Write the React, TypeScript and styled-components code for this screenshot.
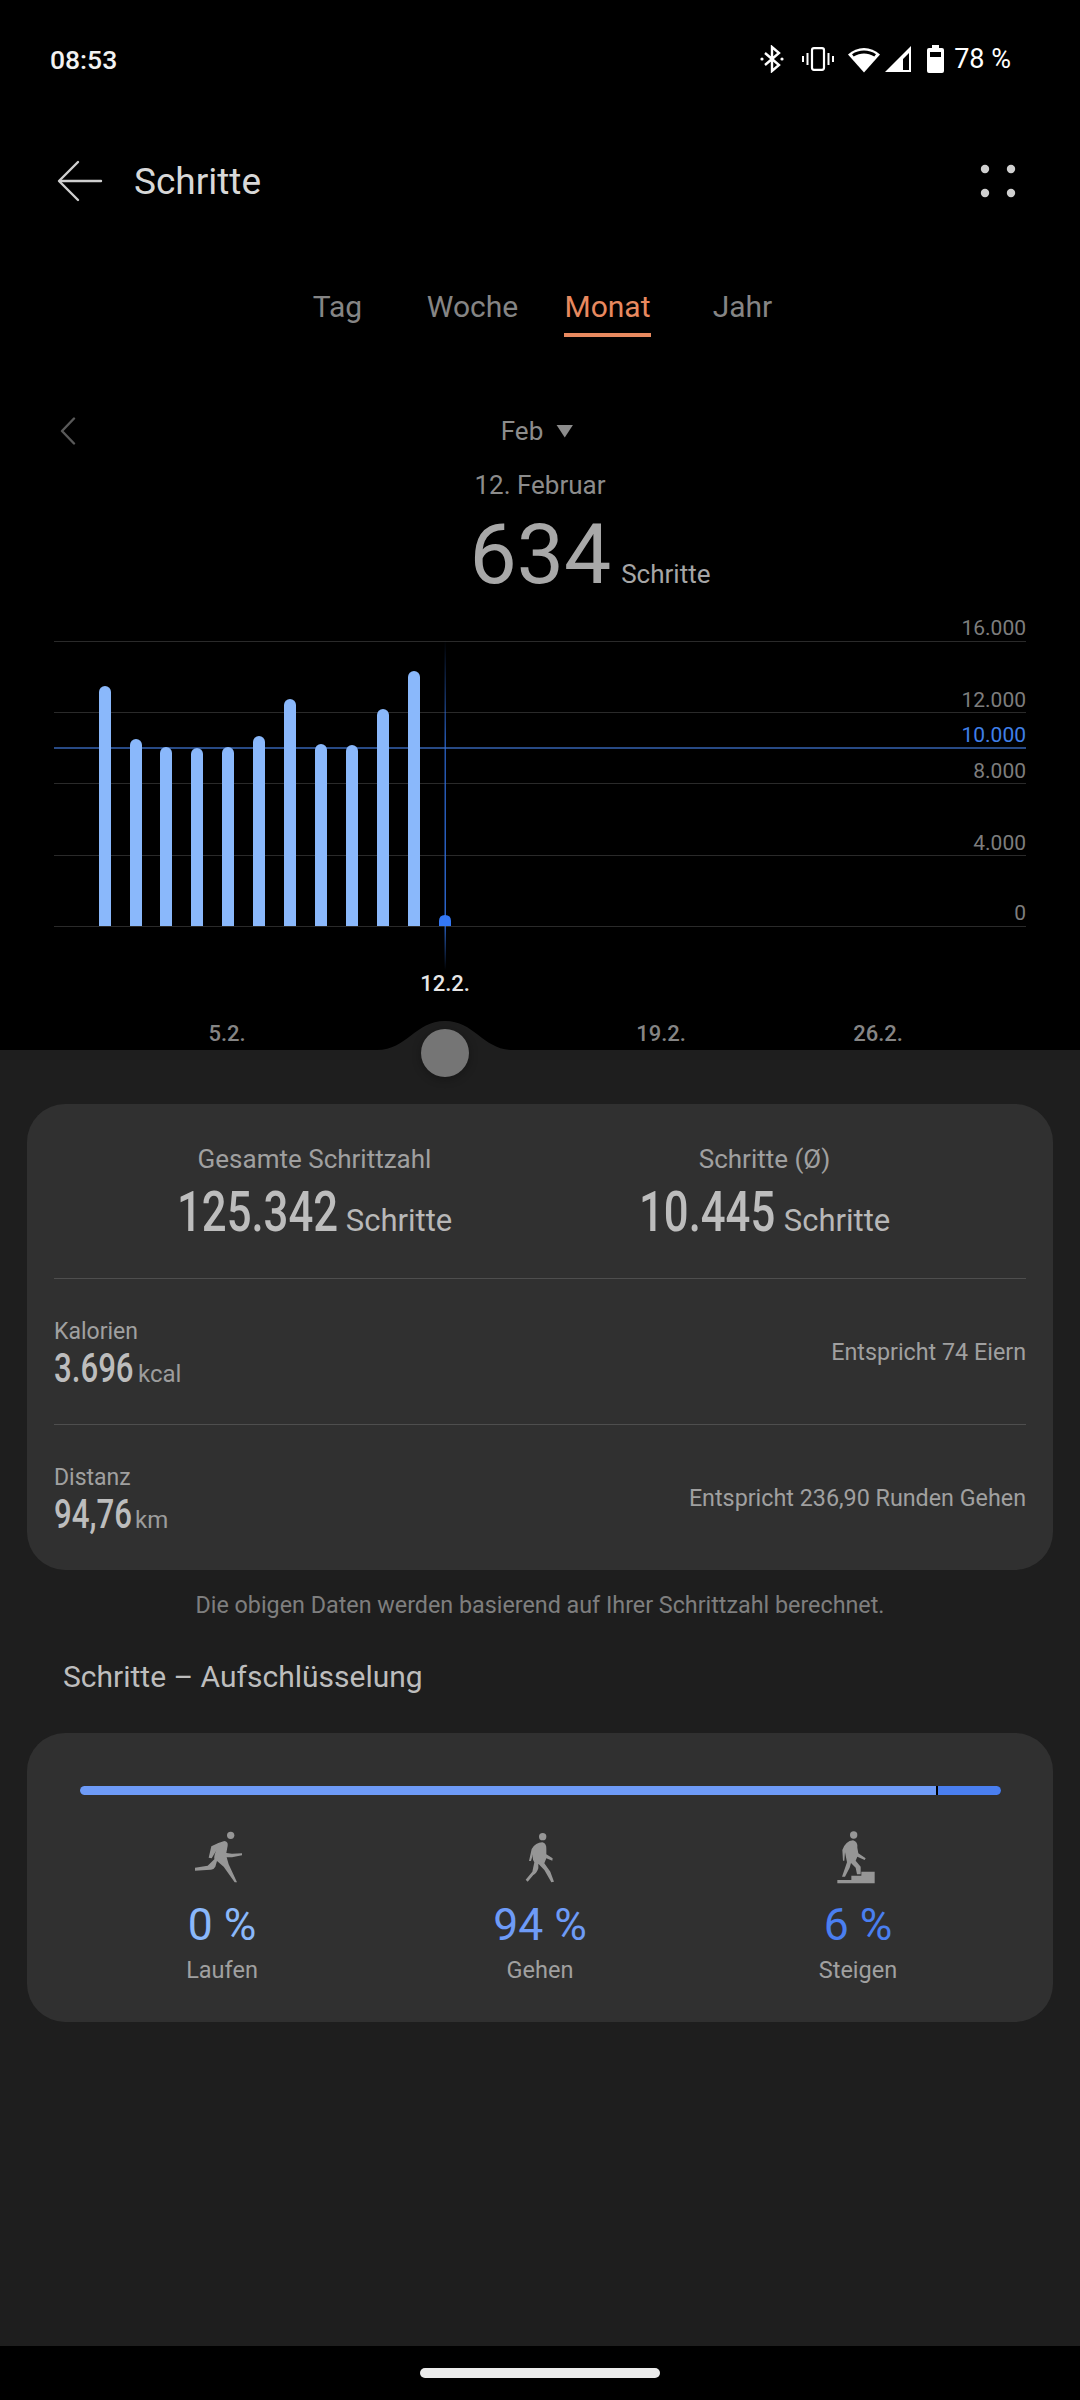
import styled, { createGlobalStyle } from 'styled-components';

const GlobalStyle = createGlobalStyle`
  html, body {
    margin: 0;
    padding: 0;
    background: #000;
  }
  * {
    box-sizing: border-box;
  }
`;

const BAR_X = [105, 136, 166, 197, 228, 259, 290, 321, 352, 383, 414];
const BAR_TOP = [686, 739, 747, 748, 747, 736, 699, 744, 745, 709, 671];
const GRID = [
  { y: 641, label: '16.000', dy: -14 },
  { y: 712, label: '12.000', dy: -13 },
  { y: 783, label: '8.000', dy: -13 },
  { y: 855, label: '4.000', dy: -13 },
  { y: 926, label: '0', dy: -14 },
];
const X_LABELS = [
  { x: 227, label: '5.2.' },
  { x: 661, label: '19.2.' },
  { x: 878, label: '26.2.' },
];
const TABS = ['Tag', 'Woche', 'Monat', 'Jahr'];

// chart svg starts at page y = 610
const CHART_TOP = 610;

const Chart = () => (
  <ChartSvg viewBox={`0 ${CHART_TOP} 1080 440`}>
    <defs>
      <linearGradient id="cursor" x1="0" y1="0" x2="0" y2="1">
        <stop offset="0" stopColor="#2f6fe0" stopOpacity="0" />
        <stop offset="0.3" stopColor="#2f6fe0" stopOpacity="0.75" />
        <stop offset="0.85" stopColor="#2f6fe0" stopOpacity="0.9" />
        <stop offset="1" stopColor="#2f6fe0" stopOpacity="0" />
      </linearGradient>
    </defs>
    {GRID.map((g) => (
      <g key={g.label}>
        <line x1="54" x2="1026" y1={g.y + 0.5} y2={g.y + 0.5} stroke="#2a2a2a" />
        <AxisLabel x="1026" y={g.y + g.dy + 8} textAnchor="end">
          {g.label}
        </AxisLabel>
      </g>
    ))}
    <line x1="54" x2="1026" y1="748" y2="748" stroke="#284a85" strokeWidth="2" />
    <AxisLabel x="1026" y="742" textAnchor="end" $goal>
      10.000
    </AxisLabel>
    {BAR_X.map((x, i) => (
      <path
        key={x}
        d={`M${x - 6} 926V${BAR_TOP[i] + 6}a6 6 0 0 1 12 0V926Z`}
        fill="#8ab8fb"
      />
    ))}
    <rect x="444.5" y="640" width="1.5" height="330" fill="url(#cursor)" />
    <path d="M439 926V921q0-6 6-6t6 6V926Z" fill="#3478f6" />
    <DayLabel x="445" y="991" textAnchor="middle" $active>
      12.2.
    </DayLabel>
    {X_LABELS.map((l) => (
      <DayLabel key={l.label} x={l.x} y="1041" textAnchor="middle">
        {l.label}
      </DayLabel>
    ))}
  </ChartSvg>
);

const BluetoothIcon = () => (
  <svg width="24" height="28" viewBox="0 0 24 28" fill="none">
    <path d="M5 8l14 12-7 6V2l7 6L5 20" stroke="#fff" strokeWidth="2.4" />
    <circle cx="2" cy="14" r="1.6" fill="#fff" />
    <circle cx="22" cy="14" r="1.6" fill="#fff" />
  </svg>
);

const VibrateIcon = () => (
  <svg width="32" height="24" viewBox="0 0 32 24" fill="none" stroke="#fff">
    <rect x="10" y="1.2" width="12" height="21.6" rx="2" strokeWidth="2.2" />
    <path d="M5.5 6v12M1 9v6M26.5 6v12M31 9v6" strokeWidth="2" />
  </svg>
);

const WifiIcon = () => (
  <svg width="34" height="28" viewBox="0 0 34 28">
    <path d="M17 27.5L1 9.5C10 .8 24 .8 33 9.5Z" fill="#fff" />
    <path d="M5 9.3C12 4.3 22 4.3 29 9.3L27.3 11.4C20.6 7.4 13.4 7.4 6.7 11.4Z" fill="#000" />
  </svg>
);

const SignalIcon = () => (
  <svg width="28" height="28" viewBox="0 0 28 28">
    <path d="M1 27L27 1V27ZM19 25h6V8l-6 6Z" fill="#fff" fillRule="evenodd" />
  </svg>
);

const BatteryIcon = () => (
  <svg width="17" height="28" viewBox="0 0 17 28">
    <path d="M5 0h7v3h3a2 2 0 0 1 2 2v21a2 2 0 0 1-2 2H2a2 2 0 0 1-2-2V5a2 2 0 0 1 2-2h3Z" fill="#fff" />
    <rect x="3" y="7" width="11" height="5" fill="#000" />
  </svg>
);

const BackIcon = () => (
  <svg width="46" height="42" viewBox="0 0 46 42" fill="none" stroke="#cfcfcf" strokeWidth="2.4">
    <path d="M21 2L2 21l19 19" strokeLinecap="round" strokeLinejoin="round" />
    <path d="M3 21h41" strokeLinecap="round" />
  </svg>
);

const MoreIcon = () => (
  <svg width="36" height="34" viewBox="0 0 36 34" fill="#d0d0d0">
    <circle cx="5" cy="5" r="4.2" />
    <circle cx="31" cy="5" r="4.2" />
    <circle cx="5" cy="29" r="4.2" />
    <circle cx="31" cy="29" r="4.2" />
  </svg>
);

const ChevronIcon = () => (
  <svg width="18" height="28" viewBox="0 0 18 28" fill="none" stroke="#595959" strokeWidth="2.4">
    <path d="M15 1.5L3 14l12 12.5" strokeLinecap="round" strokeLinejoin="round" />
  </svg>
);

const RunIcon = () => (
  <ActivitySvg viewBox="0 0 210 195">
    <circle cx="131" cy="31" r="11" />
    <path d="M65 98L73 64Q90 54 112 48Q124 50 122 62L118 84L135 86L165 85V91L135 97L119 97L125 118L150 172L143 172L110 125L90 108L85 125Q80 135 70 134L24 137V128L62 122L82 103Q80 88 92 70L74 100Z" />
  </ActivitySvg>
);

const WalkIcon = () => (
  <ActivitySvg viewBox="0 0 210 195">
    <circle cx="113" cy="35" r="11" />
    <path d="M72 108L80 72Q92 52 112 52Q125 55 124 72V88L143 100L142 107L124 100L118 115L136 140L147 170L139 172L118 135L100 116L100 130Q95 145 85 150L68 170L62 164L82 140L88 112Q78 100 88 74L78 108Z" />
  </ActivitySvg>
);

const StairsIcon = () => (
  <ActivitySvg viewBox="0 0 210 195">
    <circle cx="92" cy="30" r="11" />
    <path d="M60 107L58 75Q68 48 90 46Q105 50 103 68L106 85L128 100L125 105L103 95L98 107L113 125V148H102L98 128L84 114L80 128L66 155H57L72 112L66 82L64 107Z" />
    <path d="M43 175V165H85V152H115V140H155V175Z" />
  </ActivitySvg>
);

const ACTIVITIES = [
  { icon: <RunIcon />, value: '0 %', label: 'Laufen', color: '#8ab8fb' },
  { icon: <WalkIcon />, value: '94 %', label: 'Gehen', color: '#6e9bf7' },
  { icon: <StairsIcon />, value: '6 %', label: 'Steigen', color: '#4a7ff0' },
];

const App = () => {
  return (
    <Page>
      <GlobalStyle />
      <BlackArea>
        <StatusBar>
          <Clock>08:53</Clock>
          <StatusIcons>
            <BluetoothIcon />
            <VibrateIcon />
            <WifiIcon />
            <SignalIcon />
            <BatteryIcon />
            <BatteryText>78 %</BatteryText>
          </StatusIcons>
        </StatusBar>
        <Toolbar>
          <TitleGroup>
            <BackIcon />
            <Title>Schritte</Title>
          </TitleGroup>
          <MoreIcon />
        </Toolbar>
        <Tabs>
          {TABS.map((tab) => (
            <Tab key={tab} $active={tab === 'Monat'}>
              {tab}
            </Tab>
          ))}
        </Tabs>
        <MonthRow>
          <ChevronSlot>
            <ChevronIcon />
          </ChevronSlot>
          <MonthLabel>
            Feb
            <MonthCaret />
          </MonthLabel>
        </MonthRow>
        <DateText>12. Februar</DateText>
        <DayTotal>
          <DayValue>634</DayValue>
          <DayUnit>Schritte</DayUnit>
        </DayTotal>
        <Chart />
      </BlackArea>
      <Panel>
        <Bump viewBox="0 0 136 29">
          <path d="M0 29C30 29 38 0 68 0S106 29 136 29Z" fill="#1e1e1e" />
        </Bump>
        <Handle />
        <Card>
          <TotalsRow>
            <TotalBlock>
              <StatLabel>Gesamte Schrittzahl</StatLabel>
              <TotalValue>
                <BigNumber $width={158}>125.342</BigNumber>
                <TotalUnit>Schritte</TotalUnit>
              </TotalValue>
            </TotalBlock>
            <TotalBlock>
              <StatLabel>Schritte (Ø)</StatLabel>
              <TotalValue>
                <BigNumber $width={134}>10.445</BigNumber>
                <TotalUnit>Schritte</TotalUnit>
              </TotalValue>
            </TotalBlock>
          </TotalsRow>
          <DetailRow>
            <DetailText>
              <DetailLabel>Kalorien</DetailLabel>
              <DetailValue>
                <SmallNumber $width={79}>3.696</SmallNumber>
                <DetailUnit>kcal</DetailUnit>
              </DetailValue>
            </DetailText>
            <DetailNote>Entspricht 74 Eiern</DetailNote>
          </DetailRow>
          <DetailRow>
            <DetailText>
              <DetailLabel>Distanz</DetailLabel>
              <DetailValue>
                <SmallNumber $width={76}>94,76</SmallNumber>
                <DetailUnit>km</DetailUnit>
              </DetailValue>
            </DetailText>
            <DetailNote>Entspricht 236,90 Runden Gehen</DetailNote>
          </DetailRow>
        </Card>
        <Footnote>Die obigen Daten werden basierend auf Ihrer Schrittzahl berechnet.</Footnote>
        <SectionTitle>Schritte – Aufschlüsselung</SectionTitle>
        <BreakdownCard>
          <ShareBar>
            <ShareSegment $grow={857} $color="#6e9bf7" />
            <ShareSegment $grow={63} $color="#4a7ff0" />
          </ShareBar>
          <ActivityGrid>
            {ACTIVITIES.map((a) => (
              <Activity key={a.label}>
                {a.icon}
                <ActivityValue $color={a.color}>{a.value}</ActivityValue>
                <ActivityLabel>{a.label}</ActivityLabel>
              </Activity>
            ))}
          </ActivityGrid>
        </BreakdownCard>
      </Panel>
      <NavBar>
        <HomePill />
      </NavBar>
    </Page>
  );
};

export default App;

const Page = styled.div`
  display: flex;
  flex-direction: column;
  width: 1080px;
  height: 2400px;
  overflow: hidden;

  background: #000;
  font-family: Roboto, 'Liberation Sans', sans-serif;
`;

const BlackArea = styled.div`
  display: flex;
  flex-direction: column;
  height: 1050px;
  flex: none;
`;

const StatusBar = styled.div`
  display: flex;
  align-items: center;
  justify-content: space-between;
  height: 116px;
  padding: 2px 69px 0 50px;
`;

const Clock = styled.span`
  color: #f2f2f2;
  font-size: 26.5px;
  font-weight: 500;
`;

const StatusIcons = styled.div`
  display: flex;
  gap: 3px;
  align-items: center;

  svg:nth-child(1) {
    margin-right: 15px;
  }
  svg:nth-child(2) {
    margin-right: 10px;
  }
  svg:nth-child(4) {
    margin-right: 12px;
  }
  svg:nth-child(5) {
    margin-right: 7px;
  }
`;

const BatteryText = styled.span`
  color: #fff;
  font-size: 27px;
`;

const Toolbar = styled.div`
  display: flex;
  align-items: center;
  justify-content: space-between;
  height: 130px;
  padding: 0 64px 0 57px;
`;

const TitleGroup = styled.div`
  display: flex;
  gap: 31px;
  align-items: center;
`;

const Title = styled.span`
  color: #d8d8d8;
  font-size: 37px;
`;

const Tabs = styled.div`
  display: grid;
  grid-template-columns: repeat(4, 135px);
  justify-content: center;
  justify-items: center;
  height: 101px;
  padding-top: 40px;
`;

const Tab = styled.span<{ $active: boolean }>`
  height: 51px;
  padding-top: 2px;

  color: ${({ $active }) => ($active ? '#e8895f' : '#858585')};
  font-size: 30px;
  line-height: 38px;
  border-bottom: 4px solid ${({ $active }) => ($active ? '#e8895f' : 'transparent')};
`;

const MonthRow = styled.div`
  position: relative;
  display: flex;
  align-items: center;
  justify-content: center;
  height: 40px;
  margin-top: 64px;
  padding-right: 6px;
`;

const ChevronSlot = styled.div`
  position: absolute;
  top: 6px;
  left: 59px;
  display: flex;
`;

const MonthLabel = styled.span`
  display: flex;
  gap: 13px;
  align-items: center;

  color: #8c8c8c;
  font-size: 26px;
`;

const MonthCaret = styled.i`
  width: 17px;
  height: 13px;

  background: #8c8c8c;
  clip-path: polygon(0 0, 100% 0, 50% 100%);
`;

const DateText = styled.div`
  margin-top: 16px;

  color: #8c8c8c;
  font-size: 26px;
  line-height: 36px;
  text-align: center;
`;

const DayTotal = styled.div`
  display: flex;
  gap: 10px;
  align-items: baseline;
  justify-content: center;
  height: 90px;
  margin-top: 7px;
  padding-left: 100px;
  line-height: 90px;
`;

const DayValue = styled.span`
  color: #a8a8a8;
  font-size: 84px;
`;

const DayUnit = styled.span`
  color: #a6a6a6;
  font-size: 26px;
`;

const ChartSvg = styled.svg`
  display: block;
  width: 1080px;
  height: 440px;
  margin-top: auto;
  flex: none;
`;

const AxisLabel = styled.text<{ $goal?: boolean }>`
  fill: ${({ $goal }) => ($goal ? '#3f7fe8' : '#7d7d7d')};
  font-size: 21px;
`;

const DayLabel = styled.text<{ $active?: boolean }>`
  fill: ${({ $active }) => ($active ? '#e6e6e6' : '#858585')};
  font-size: 22px;
  font-weight: 500;
`;

const Panel = styled.div`
  position: relative;
  display: flex;
  flex-direction: column;
  flex: 1;
  padding: 54px 27px 0;

  background: #1e1e1e;
`;

const Bump = styled.svg`
  position: absolute;
  top: -29px;
  left: 377px;
  width: 136px;
  height: 29px;
`;

const Handle = styled.div`
  position: absolute;
  top: -21px;
  left: 421px;
  width: 48px;
  height: 48px;

  background: #757575;
  border-radius: 50%;
  box-shadow: 0 2px 10px rgba(0, 0, 0, 0.3);
`;

const Card = styled.div`
  display: flex;
  flex-direction: column;
  height: 466px;
  padding: 0 27px;

  background: #303030;
  border-radius: 38px;
`;

const TotalsRow = styled.div`
  display: grid;
  grid-template-columns: 450px 450px;
  justify-content: center;
  height: 174px;
  padding: 36px 0 0;
  margin-right: 1px;
`;

const TotalBlock = styled.div`
  display: flex;
  flex-direction: column;
  align-items: center;
`;

const StatLabel = styled.span`
  color: #a0a0a0;
  font-size: 26px;
  line-height: 38px;
`;

const TotalValue = styled.div`
  display: flex;
  gap: 11px;
  align-items: baseline;
  margin-top: 2px;
  line-height: 64px;
`;

// no condensed face is installed: Roboto squeezed to the width the digits have in the app
const CondensedNumber = styled.span<{ $width: number }>`
  display: inline-block;
  width: ${({ $width }) => $width}px;

  color: #bdbdbd;
  font-weight: 500;
  white-space: nowrap;
  transform: scaleX(0.78);
  transform-origin: left;
`;

const BigNumber = styled(CondensedNumber)`
  font-size: 56px;
`;

const TotalUnit = styled.span`
  color: #b8b8b8;
  font-size: 31px;
`;

const DetailRow = styled.div`
  display: flex;
  align-items: center;
  justify-content: space-between;
  height: 146px;

  border-top: 1.5px solid #4e4e4e;
`;

const DetailText = styled.div`
  padding-top: 10px;
`;

const DetailLabel = styled.div`
  color: #a0a0a0;
  font-size: 23px;
  line-height: 30px;
`;

const DetailValue = styled.div`
  display: flex;
  gap: 5px;
  align-items: baseline;
  line-height: 44px;
`;

const SmallNumber = styled(CondensedNumber)`
  font-size: 40px;
`;

const DetailUnit = styled.span`
  color: #9c9c9c;
  font-size: 24px;
`;

const DetailNote = styled.span`
  color: #a0a0a0;
  font-size: 23.3px;
`;

const Footnote = styled.div`
  margin-top: 20px;

  color: #7e7e7e;
  font-size: 23.3px;
  line-height: 30px;
  text-align: center;
`;

const SectionTitle = styled.div`
  margin-top: 37px;
  padding-left: 36px;

  color: #bdbdbd;
  font-size: 30px;
  line-height: 40px;
`;

const BreakdownCard = styled.div`
  display: flex;
  flex-direction: column;
  height: 289px;
  margin-top: 36px;
  padding-top: 53px;

  background: #303030;
  border-radius: 38px;
`;

const ShareBar = styled.div`
  display: flex;
  gap: 2px;
  height: 9px;
  margin: 0 52px 0 53px;
  overflow: hidden;

  background: #000;
  border-radius: 5px;
`;

const ShareSegment = styled.div<{ $grow: number; $color: string }>`
  flex: ${({ $grow }) => $grow};

  background: ${({ $color }) => $color};
`;

const ActivityGrid = styled.div`
  display: grid;
  grid-template-columns: repeat(3, 318px);
  justify-content: center;
  margin-top: 30px;
`;

const Activity = styled.div`
  display: flex;
  flex-direction: column;
  align-items: center;
`;

const ActivitySvg = styled.svg`
  width: 70px;
  height: 65px;

  fill: #969696;
`;

const ActivityValue = styled.div<{ $color: string }>`
  margin-top: 10px;

  color: ${({ $color }) => $color};
  font-size: 44.5px;
  line-height: 50px;
`;

const ActivityLabel = styled.div`
  margin-top: 3px;

  color: #a0a0a0;
  font-size: 23.5px;
  line-height: 34px;
`;

const NavBar = styled.div`
  display: flex;
  justify-content: center;
  height: 54px;
  padding-top: 22px;
  flex: none;
`;

const HomePill = styled.div`
  width: 240px;
  height: 10px;

  background: #ebebeb;
  border-radius: 5px;
`;
